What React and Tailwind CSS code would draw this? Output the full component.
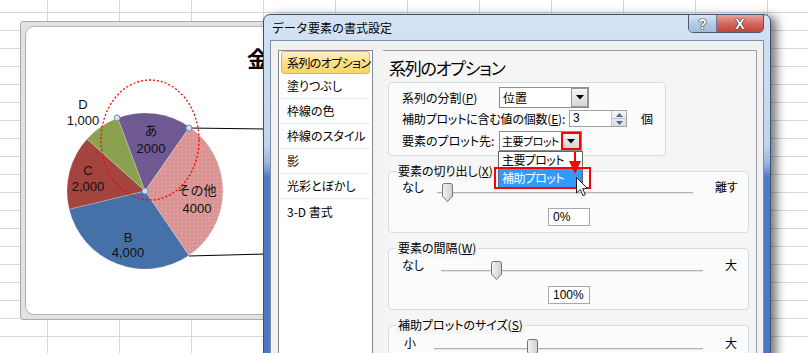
import React from 'react';

const CX = 145;
const CY = 191;
const R = 78;

const pt = (deg) => {
  const a = (deg * Math.PI) / 180;
  return [CX + R * Math.sin(a), CY - R * Math.cos(a)];
};

const slicePath = (a0, a1) => {
  const [x0, y0] = pt(a0);
  const [x1, y1] = pt(a1);
  const large = a1 - a0 > 180 ? 1 : 0;
  return `M${CX} ${CY} L${x0} ${y0} A${R} ${R} 0 ${large} 1 ${x1} ${y1} Z`;
};

const SLICES = [
  { a0: -20.5, a1: 34.9, fill: '#6f5992' },
  { a0: 34.9, a1: 145.7, fill: 'url(#dots)' },
  { a0: 145.7, a1: 256.5, fill: '#4671a8' },
  { a0: 256.5, a1: 311.9, fill: '#a4443f' },
  { a0: 311.9, a1: 339.5, fill: '#8aa24f' },
];

const LABELS = [
  { x: 83, y: 104, t: 'D' },
  { x: 83, y: 120, t: '1,000' },
  { x: 151, y: 130, t: 'あ' },
  { x: 151, y: 148, t: '2000' },
  { x: 88, y: 170, t: 'C' },
  { x: 88, y: 186, t: '2,000' },
  { x: 197, y: 190, t: 'その他' },
  { x: 197, y: 208, t: '4000' },
  { x: 128, y: 237, t: 'B' },
  { x: 128, y: 252, t: '4,000' },
];

const NAV = ['塗りつぶし', '枠線の色', '枠線のスタイル', '影', '光彩とぼかし', '3-D 書式'];

function DropButton({ red }) {
  return (
    <div
      className={
        red
          ? 'w-[20px] flex-none h-full flex items-center justify-center border-2 border-[#ff0000] bg-[linear-gradient(to_bottom,#f4f4f4,#d4d4d4)]'
          : 'w-[17px] flex-none h-full flex items-center justify-center border border-[#9a9a9a] bg-[linear-gradient(to_bottom,#f6f6f6,#d6d6d6)]'
      }
    >
      <svg width="8" height="5" viewBox="0 0 8 5">
        <path d="M0 0 H8 L4 4.5 Z" fill="#000" />
      </svg>
    </div>
  );
}

function Thumb() {
  return (
    <svg width="11" height="19" viewBox="0 0 11 19">
      <defs>
        <linearGradient id="thumbg" x1="0" y1="0" x2="1" y2="0">
          <stop offset="0" stopColor="#f4f4f4" />
          <stop offset="1" stopColor="#cfcfcf" />
        </linearGradient>
      </defs>
      <path d="M0.5 2.5 Q0.5 0.5 2.5 0.5 H8.5 Q10.5 0.5 10.5 2.5 V13 L5.5 18.5 L0.5 13 Z" fill="url(#thumbg)" stroke="#737373" />
    </svg>
  );
}

function SliderGroup({ legend, left, labelW, trackW, thumbX, right, value, pt, h }) {
  return (
    <div className={`relative ml-[5px] mt-[15px] w-[361px] rounded-[4px] border border-[#d2dde9] bg-[#fbfbfb] pl-[13px] ${pt} ${h}`}>
      <div className="absolute -top-[10px] left-[7px] px-[2px] bg-[#f5f5f5] leading-[18px] whitespace-nowrap">{legend}</div>
      <div className="flex items-start h-[24px]">
        <div className={`mt-[1px] leading-[18px] ${labelW}`}>{left}</div>
        <div className={`relative mt-[6px] h-[19px] ${trackW}`}>
          <div className="absolute left-0 right-0 top-[9px] h-[2px] bg-[#b2b2b2] border-b border-[#e4e4e4]" />
          <div className={`absolute top-0 ${thumbX}`}>
            <Thumb />
          </div>
        </div>
        <div className="ml-[22px] mt-[1px] leading-[18px]">{right}</div>
      </div>
      {value && (
        <div className="ml-[146px] mt-[7px] w-[42px] h-[18px] border border-[#a9a9a9] bg-white pl-[4px] leading-[16px] font-['Liberation_Sans',sans-serif] text-[12px]">
          {value}
        </div>
      )}
    </div>
  );
}

export default function App() {
  return (
    <div className="relative w-[808px] h-[353px] overflow-hidden bg-white [background-image:linear-gradient(to_right,#d3d8e2_1px,transparent_1px),linear-gradient(to_bottom,#d3d8e2_1px,transparent_1px)] [background-size:72px_100%,100%_18px] [background-position:47px_0,0_12px] font-['Noto_Sans_CJK_JP','Noto_Sans',sans-serif] text-[12px] text-black">
      {/* chart object on the sheet */}
      <div className="absolute left-[20px] top-[21px] w-[300px] h-[299px] rounded-[3px] border border-[#a9a9a9] bg-[#e2e2e2] p-[4px]">
        <div className="h-full rounded-[9px] border border-[#b4b4b4] bg-white">
          <div className="pl-[221px] pt-[15px] text-[22px] font-bold leading-[30px]">金額</div>
        </div>
      </div>

      <svg className="absolute left-0 top-0" width="808" height="353" viewBox="0 0 808 353">
        <defs>
          <pattern id="dots" width="4" height="4" patternUnits="userSpaceOnUse">
            <rect width="4" height="4" fill="#d89593" />
            <rect x="1" y="1" width="1" height="1" fill="#e8bcba" />
          </pattern>
        </defs>
        {SLICES.map((s, i) => (
          <path key={i} d={slicePath(s.a0, s.a1)} fill={s.fill} stroke="#ffffff" strokeOpacity="0.35" strokeWidth="0.6" />
        ))}
        <line x1="189" y1="128" x2="266" y2="129" stroke="#000" strokeWidth="1" />
        <line x1="189" y1="256" x2="266" y2="254" stroke="#000" strokeWidth="1" />
        {LABELS.map((l, i) => (
          <text
            key={i}
            x={l.x}
            y={l.y}
            textAnchor="middle"
            dominantBaseline="central"
            fontSize="13"
            fill="#111"
            fontFamily="'Liberation Sans','Noto Sans CJK JP',sans-serif"
          >
            {l.t}
          </text>
        ))}
        <ellipse cx="150" cy="140" rx="49" ry="60" fill="none" stroke="#ff0000" strokeWidth="1.3" strokeDasharray="2 2" />
        {[
          [117, 118],
          [189, 128],
          [145, 191],
        ].map(([x, y], i) => (
          <circle key={i} cx={x} cy={y} r="3" fill="#d3ddef" stroke="#6f8dbb" strokeWidth="1" />
        ))}
      </svg>

      {/* dialog window */}
      <div className="absolute left-[263px] top-[14px] w-[508px] h-[360px] flex flex-col rounded-t-[7px] border border-[#3f5069] bg-[linear-gradient(to_bottom,#d4e2f4_0px,#c0d4ee_130px,#98b6e0_148px,#4c7cc6_162px,#4878c4_100%)] shadow-[6px_2px_10px_rgba(0,0,0,0.5)]">
        <div className="relative h-[25px] flex-none flex items-center pl-[8px] text-[12px] leading-[16px] text-black">
          データ要素の書式設定
          <div className="absolute right-[6px] -top-[1px] flex h-[19px] rounded-b-[5px] border border-[#4b5a72] overflow-hidden">
            <div className="w-[28px] flex items-center justify-center border-r border-[#6b7b94] bg-[linear-gradient(to_bottom,#dbe6f4,#b7cbe6_50%,#a2badd)] font-['Liberation_Sans',sans-serif] font-bold text-[14px] text-white [text-shadow:0_0_1px_#222,0_0_1px_#222,0_0_1px_#222]">
              ?
            </div>
            <div className="w-[46px] flex items-center justify-center bg-[linear-gradient(to_bottom,#e6a49b,#d36a5f_50%,#c0443a)] font-['Liberation_Sans',sans-serif] font-bold text-[14px] text-white [text-shadow:0_0_1px_#222,0_0_1px_#222,0_0_1px_#222]">
              X
            </div>
          </div>
        </div>

        <div className="flex-1 mx-[6px] flex border border-[#7e90ab] bg-[#f1f1f1] pl-[7px] pt-[9px] [font-feature-settings:'palt']">
          {/* left category list */}
          <div className="w-[95px] flex-none border border-[#828790] bg-white px-[2px] whitespace-nowrap">
            <div className="h-[23px] flex items-center pl-[5px] rounded-[3px] border border-[#e2b44c] bg-[linear-gradient(to_bottom,#fff1c2,#fddc82_55%,#fbd36d)] leading-[16px] tracking-[-0.6px]">
              系列のオプション
            </div>
            {NAV.map((n, i) => (
              <div
                key={n}
                className={
                  i === NAV.length - 1
                    ? 'h-[26px] flex items-center pl-[6px] leading-[16px]'
                    : 'h-[25px] flex items-center pl-[6px] leading-[16px] border-b border-[#e3e9f0]'
                }
              >
                {n}
              </div>
            ))}
          </div>

          {/* right options panel */}
          <div className="ml-[10px] w-[374px] flex-none border-t border-r border-[#9a9ea6] bg-[#f5f5f5]">
            <div className="pl-[6px] mt-[7px] text-[17px] leading-[20px] tracking-[-1.2px]">系列のオプション</div>

            <div className="ml-[5px] mt-[4px] w-[278px] h-[74px] rounded-[4px] border border-[#d2dde9] bg-[#fbfbfb] pl-[13px] pt-[4px] whitespace-nowrap">
              <div className="flex items-center h-[21px]">
                <div className="w-[97px] leading-[16px]">
                  系列の分割(<span className="underline">P</span>)
                </div>
                <div className="w-[90px] h-[21px] flex border border-[#8d8d8d] bg-white">
                  <div className="flex-1 pl-[3px] leading-[19px]">位置</div>
                  <DropButton />
                </div>
              </div>
              <div className="flex items-center h-[17px] mt-[2px]">
                <div className="w-[167px] leading-[16px] tracking-[-0.2px]">
                  補助プロットに含む値の個数(<span className="underline">E</span>):
                </div>
                <div className="w-[58px] h-[17px] flex border border-[#a3a3a3] bg-white">
                  <div className="flex-1 pl-[3px] leading-[15px] font-['Liberation_Sans',sans-serif]">3</div>
                  <div className="w-[15px] flex flex-col border-l border-[#c4c4c4] bg-[linear-gradient(to_bottom,#f6f6f6,#dcdcdc)]">
                    <div className="flex-1 flex items-center justify-center border-b border-[#c4c4c4]">
                      <svg width="7" height="4" viewBox="0 0 7 4">
                        <path d="M0 4 L3.5 0 L7 4 Z" fill="#4a6d9c" />
                      </svg>
                    </div>
                    <div className="flex-1 flex items-center justify-center">
                      <svg width="7" height="4" viewBox="0 0 7 4">
                        <path d="M0 0 L7 0 L3.5 4 Z" fill="#4a6d9c" />
                      </svg>
                    </div>
                  </div>
                </div>
                <div className="ml-[14px] leading-[16px]">個</div>
              </div>
              <div className="flex items-center h-[20px] mt-[4px]">
                <div className="w-[97px] leading-[16px]">要素のプロット先:</div>
                <div className="relative z-20 w-[83px] h-[20px] flex border border-[#8d8d8d] bg-white">
                  <div className="flex-1 min-w-0 pl-[2px] text-[11px] leading-[18px] tracking-[-0.5px]">主要プロット</div>
                  <DropButton red />
                  <div className="absolute left-[-2px] top-[19px] w-[85px] border border-[#646464] bg-white">
                    <div className="h-[17px] pl-[3px] leading-[16px] tracking-[-0.6px]">主要プロット</div>
                    <div className="h-[18px] pl-[3px] leading-[18px] tracking-[-0.6px] bg-[#3399ff] text-white">補助プロット</div>
                  </div>
                  <div className="absolute left-[-6px] top-[35px] w-[97px] h-[22px] border-2 border-[#ff0000]" />
                  <svg className="absolute left-[68px] top-[20px]" width="14" height="24" viewBox="0 0 14 24">
                    <line x1="7" y1="0" x2="7" y2="10" stroke="#ff0000" strokeWidth="2" />
                    <path d="M1 9 H13 L7 22 Z" fill="#ff0000" />
                  </svg>
                  <svg className="absolute left-[76px] top-[45px]" width="13" height="20" viewBox="0 0 13 20">
                    <path d="M0.5 0.5 V16 L4.3 12.4 L7 18.7 L9.3 17.7 L6.7 11.6 H11.6 Z" fill="#fff" stroke="#222" strokeWidth="1" strokeLinejoin="round" />
                  </svg>
                </div>
              </div>
            </div>

            <SliderGroup
              legend={
                <>
                  要素の切り出し(<span className="underline">X</span>)
                </>
              }
              left="なし"
              labelW="w-[35px]"
              trackW="w-[256px]"
              thumbX="left-[5px]"
              right="離す"
              value="0%"
              pt="pt-[5px]"
              h="h-[62px]"
            />
            <SliderGroup
              legend={
                <>
                  要素の間隔(<span className="underline">W</span>)
                </>
              }
              left="なし"
              labelW="w-[39px]"
              trackW="w-[262px]"
              thumbX="left-[50px]"
              right="大"
              value="100%"
              pt="pt-[6px]"
              h="h-[62px]"
            />
            <SliderGroup
              legend={
                <>
                  補助プロットのサイズ(<span className="underline">S</span>)
                </>
              }
              left="小"
              labelW="w-[32px] pl-[2px]"
              trackW="w-[269px]"
              thumbX="left-[93px]"
              right="大"
              pt="pt-[7px]"
              h="h-[62px]"
            />
          </div>
        </div>
      </div>
    </div>
  );
}
